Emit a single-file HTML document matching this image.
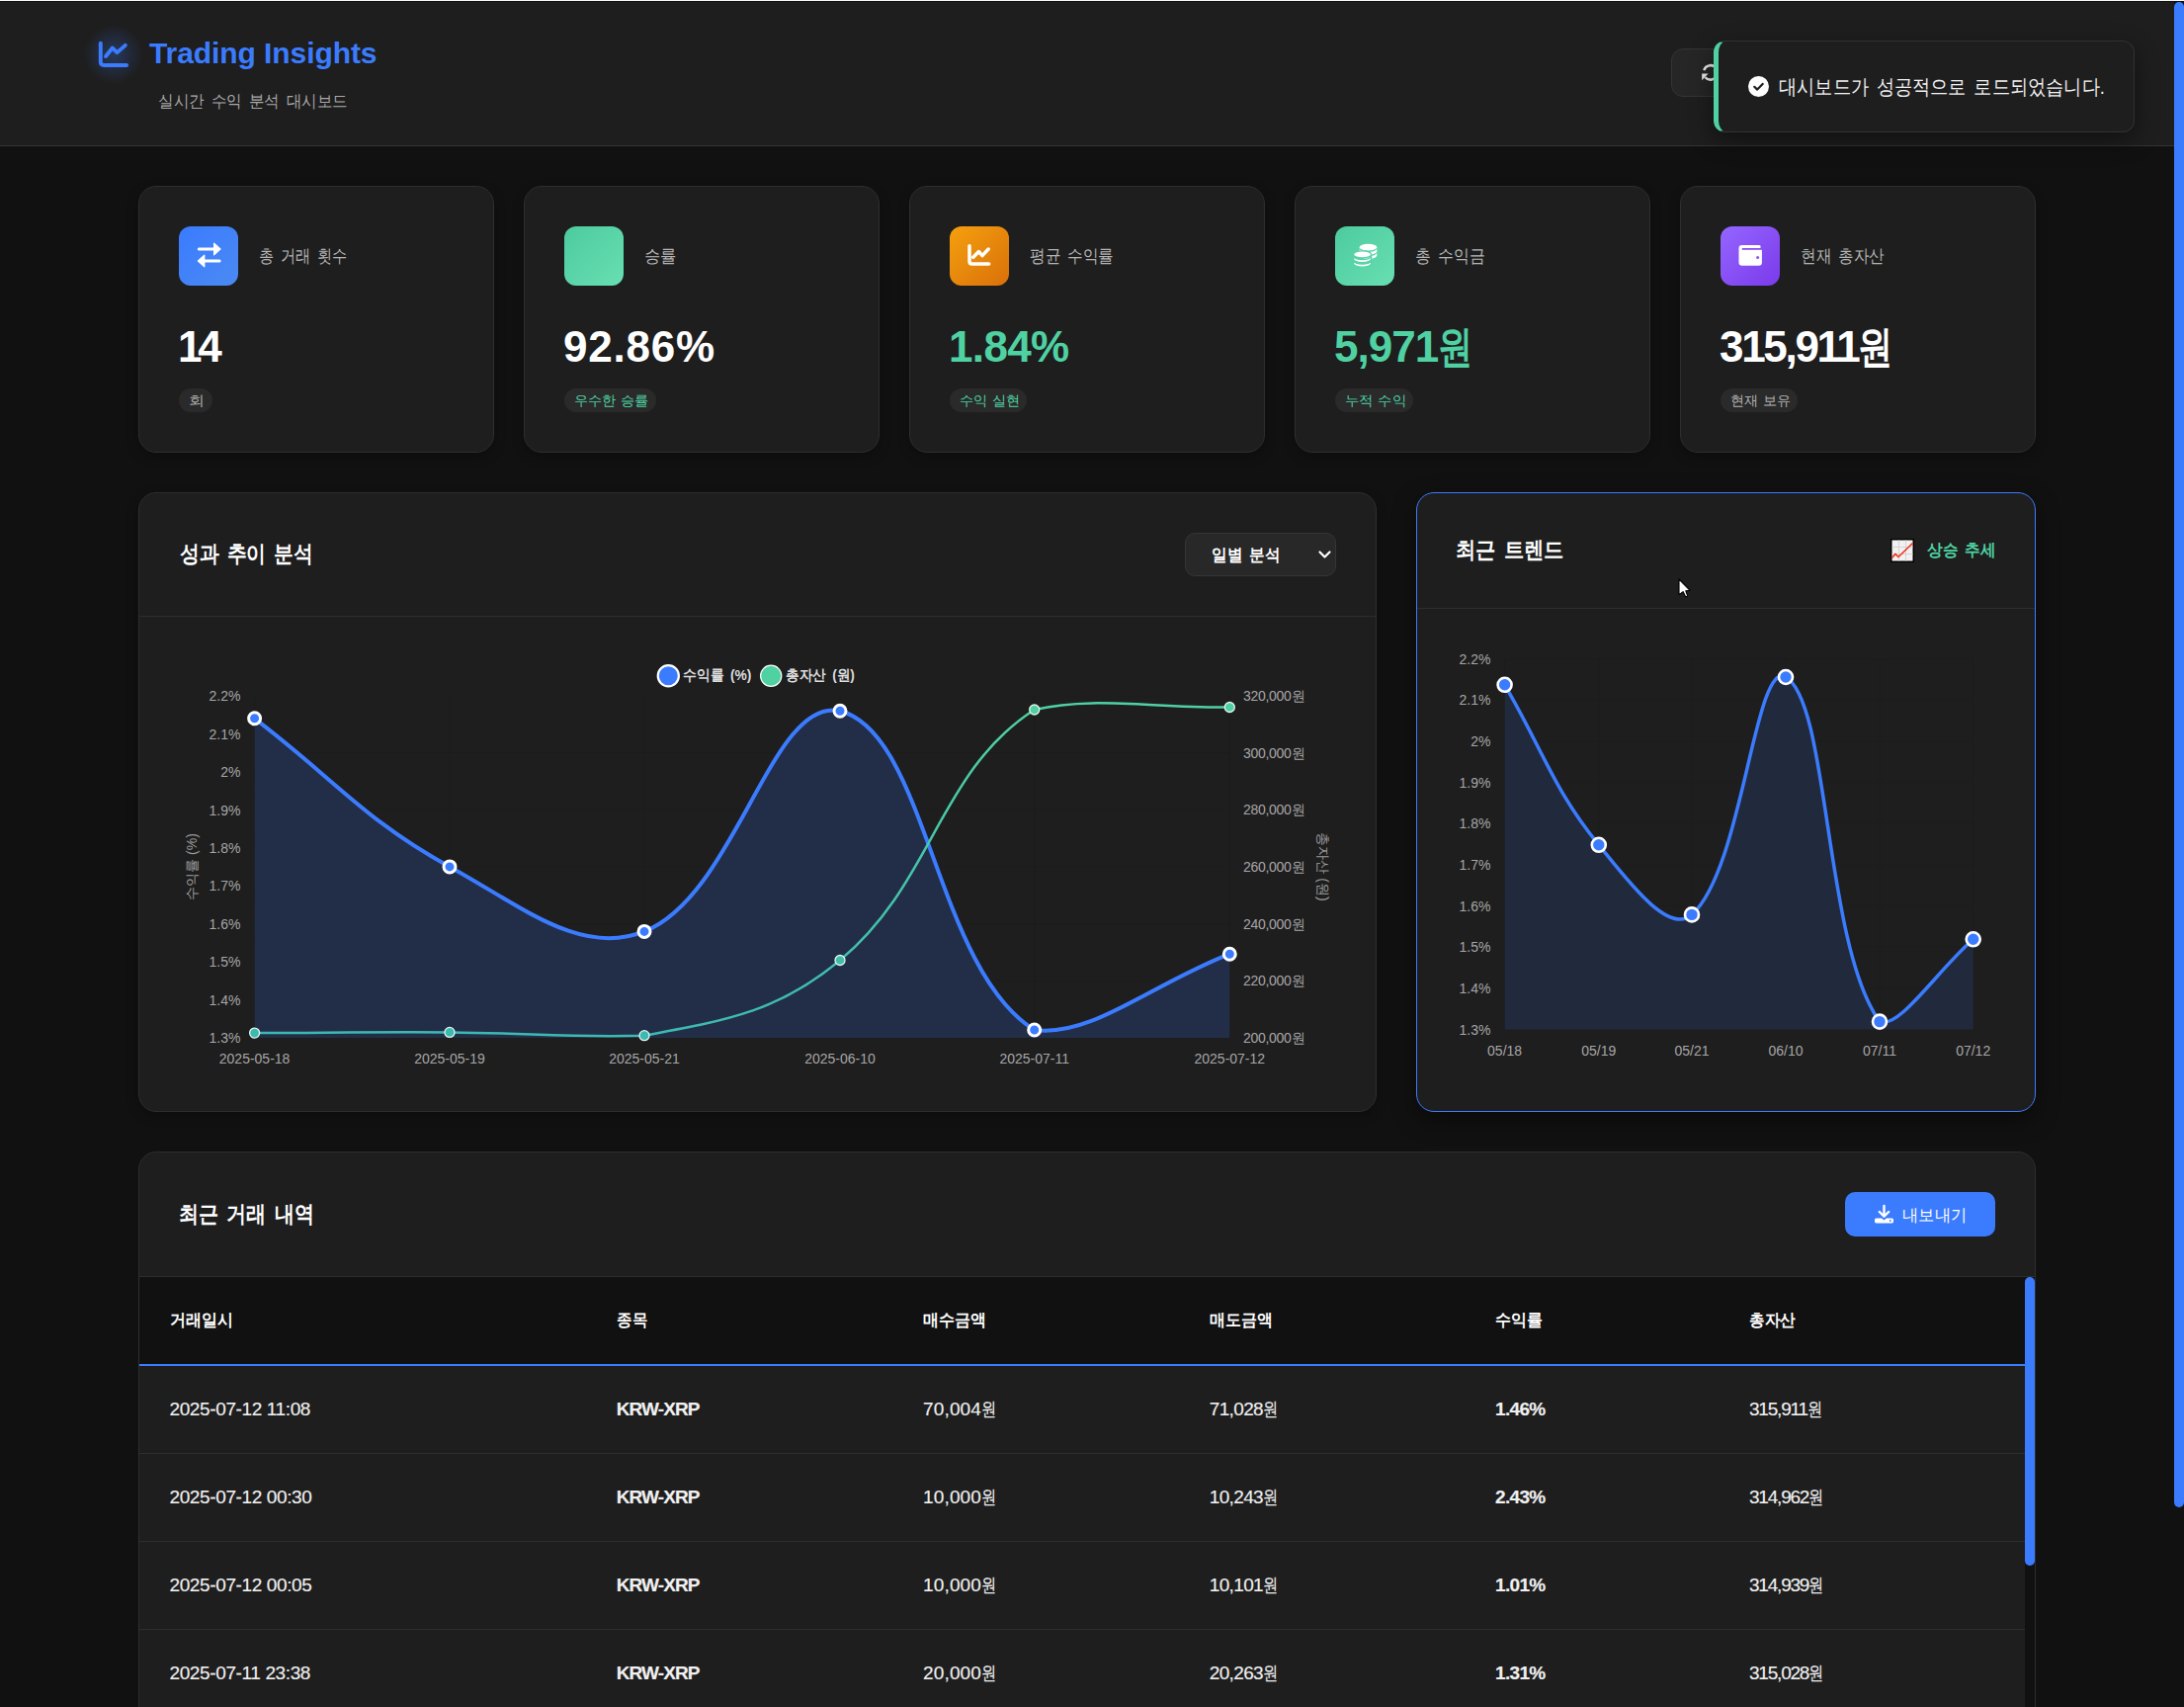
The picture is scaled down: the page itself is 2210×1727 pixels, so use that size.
<!DOCTYPE html><html><head><meta charset="utf-8"><style>
html,body{margin:0;padding:0;background:#111111;width:2210px;height:1727px;overflow:hidden;position:relative;font-family:"Liberation Sans",sans-serif}
.t{position:absolute;white-space:nowrap;line-height:1}
.won{display:inline-block;letter-spacing:0;transform:scaleX(0.8);transform-origin:0 50%;margin-right:-0.2em}
</style></head><body>
<div style="position:absolute;left:0px;top:0px;width:2210px;height:1px;background:#f7f7f7"></div>
<div style="position:absolute;left:0px;top:1px;width:2210px;height:1px;background:#111"></div>
<div style="position:absolute;left:0px;top:2px;width:2200px;height:145px;background:#1e1e1e"></div>
<div style="position:absolute;left:0px;top:147px;width:2200px;height:1px;background:#333"></div>
<svg style="position:absolute;left:90px;top:33px;overflow:visible" width="50" height="44" viewBox="0 0 50 44">
<defs><radialGradient id="glow"><stop offset="0" stop-color="#3b7cff" stop-opacity="0.28"/><stop offset="1" stop-color="#3b7cff" stop-opacity="0"/></radialGradient></defs>
<circle cx="25" cy="22" r="30" fill="url(#glow)"/>
<path d="M11.8,10.8 V29.5 Q11.8,33 15.3,33 H38.1" fill="none" stroke="#3b7cff" stroke-width="3.9" stroke-linecap="round" stroke-linejoin="round"/>
<path d="M17,23.9 L23.8,15.6 L28.5,20.1 L36.8,12.9" fill="none" stroke="#3b7cff" stroke-width="3.9" stroke-linecap="round" stroke-linejoin="round"/>
</svg>
<div class="t" id="e0" style="left:151.0px;top:39.2px;font-size:30px;font-weight:700;color:#3b7cff;letter-spacing:-0.08px;word-spacing:0px;">Trading Insights</div>
<div class="t" id="e1" style="left:160.0px;top:94.0px;font-size:17px;font-weight:400;color:#a8a8a8;letter-spacing:0px;transform:scaleX(0.9137);transform-origin:0 50%;word-spacing:3px;">실시간 수익 분석 대시보드</div>
<div style="position:absolute;left:1691px;top:49px;width:130px;height:49px;background:#262626;border:1px solid #343434;border-radius:12px;box-sizing:border-box"></div>
<svg style="position:absolute;left:1716px;top:60px" width="30" height="26" viewBox="0 0 30 26">
<path d="M8.3,11.2 A7,7 0 0 1 21,9.5" fill="none" stroke="#ececec" stroke-width="2.5"/>
<path d="M21.5,15.5 A7,7 0 0 1 9.5,18.2" fill="none" stroke="#ececec" stroke-width="2.5"/>
<path d="M6.2,14.6 L12.6,14.6 L6.2,21.2 Z" fill="#ececec"/>
<path d="M23.8,11.8 L17.4,11.8 L23.8,5.2 Z" fill="#ececec"/>
</svg>
<div style="position:absolute;left:1734px;top:41px;width:426px;height:93px;background:#1e1e1e;border:1px solid #323232;border-left:5px solid #4fd1a2;border-radius:12px;box-sizing:border-box;box-shadow:0 8px 24px rgba(0,0,0,0.45)"></div>
<svg style="position:absolute;left:1768.9px;top:77px" width="21" height="21" viewBox="0 0 21 21">
<circle cx="10.5" cy="10.5" r="10.5" fill="#fff"/>
<path d="M6.3,10.8 L9.2,13.6 L14.6,7.9" fill="none" stroke="#1e1e1e" stroke-width="2.2" stroke-linecap="round" stroke-linejoin="round"/>
</svg>
<div class="t" id="e2" style="left:1799.5px;top:76.9px;font-size:21px;font-weight:400;color:#f2f2f2;letter-spacing:0px;transform:scaleX(0.8668);transform-origin:0 50%;word-spacing:3px;">대시보드가 성공적으로 로드되었습니다.</div>
<div style="position:absolute;left:140px;top:188px;width:360px;height:270px;background:#1e1e1e;border:1px solid #2e2e2e;border-radius:18px;box-sizing:border-box;box-shadow:0 4px 12px rgba(0,0,0,0.25)"></div>
<div style="position:absolute;left:181px;top:229px;width:60px;height:60px;background:linear-gradient(135deg,#3a7bff,#4b8af2);border-radius:12px"></div>
<svg style="position:absolute;left:181px;top:229px" width="60" height="60" viewBox="0 0 60 60"><path d="M20.3,23 H36.5" stroke="#fff" stroke-width="3" stroke-linecap="round"/><path d="M35.6,17.2 L42,23 L35.6,28.8 Z" fill="#fff" stroke="#fff" stroke-width="1.2" stroke-linejoin="round"/><path d="M41.1,35 H25" stroke="#fff" stroke-width="3" stroke-linecap="round"/><path d="M25.8,29.2 L19.4,35 L25.8,40.8 Z" fill="#fff" stroke="#fff" stroke-width="1.2" stroke-linejoin="round"/></svg>
<div class="t" id="e3" style="left:261.5px;top:249.5px;font-size:18px;font-weight:400;color:#b4b4b4;letter-spacing:0px;transform:scaleX(0.8436);transform-origin:0 50%;word-spacing:3px;">총 거래 횟수</div>
<div class="t" id="e4" style="left:180.0px;top:329.1px;font-size:44px;font-weight:700;color:#ffffff;letter-spacing:-4.30px;word-spacing:0px;">14</div>
<div style="position:absolute;left:181px;top:393px;width:34px;height:24px;background:#2a2a2a;border-radius:12px"></div>
<div class="t" id="e5" style="left:191.0px;top:398.2px;font-size:14px;font-weight:500;color:#b0b0b0;letter-spacing:0px;transform:scaleX(1.1440);transform-origin:0 50%;word-spacing:0.5px;">회</div>
<div style="position:absolute;left:530px;top:188px;width:360px;height:270px;background:#1e1e1e;border:1px solid #2e2e2e;border-radius:18px;box-sizing:border-box;box-shadow:0 4px 12px rgba(0,0,0,0.25)"></div>
<div style="position:absolute;left:571px;top:229px;width:60px;height:60px;background:linear-gradient(135deg,#4ccb9f,#68dfb2);border-radius:12px"></div>
<div class="t" id="e6" style="left:651.5px;top:249.5px;font-size:18px;font-weight:400;color:#b4b4b4;letter-spacing:0px;transform:scaleX(0.9104);transform-origin:0 50%;word-spacing:3px;">승률</div>
<div class="t" id="e7" style="left:570.0px;top:329.1px;font-size:44px;font-weight:700;color:#ffffff;letter-spacing:0.80px;word-spacing:0px;">92.86%</div>
<div style="position:absolute;left:571px;top:393px;width:93px;height:24px;background:#2a2a2a;border-radius:12px"></div>
<div class="t" id="e8" style="left:581.0px;top:398.2px;font-size:14px;font-weight:500;color:#4fd1a2;letter-spacing:0px;transform:scaleX(1.0146);transform-origin:0 50%;word-spacing:0.5px;">우수한 승률</div>
<div style="position:absolute;left:920px;top:188px;width:360px;height:270px;background:#1e1e1e;border:1px solid #2e2e2e;border-radius:18px;box-sizing:border-box;box-shadow:0 4px 12px rgba(0,0,0,0.25)"></div>
<div style="position:absolute;left:961px;top:229px;width:60px;height:60px;background:linear-gradient(135deg,#f5a00e,#d9700a);border-radius:12px"></div>
<svg style="position:absolute;left:961px;top:229px" width="60" height="60" viewBox="0 0 60 60"><path d="M20,19.8 V35.5 Q20,38 22.5,38 H39.7" fill="none" stroke="#fff" stroke-width="3.5" stroke-linecap="round"/><path d="M23.8,31.3 L29.4,25.5 L33,29.6 L39.2,23" fill="none" stroke="#fff" stroke-width="3.5" stroke-linecap="round" stroke-linejoin="round"/></svg>
<div class="t" id="e9" style="left:1041.5px;top:249.5px;font-size:18px;font-weight:400;color:#b4b4b4;letter-spacing:0px;transform:scaleX(0.8678);transform-origin:0 50%;word-spacing:3px;">평균 수익률</div>
<div class="t" id="e10" style="left:960.0px;top:329.1px;font-size:44px;font-weight:700;color:#4fd1a2;letter-spacing:-0.65px;word-spacing:0px;">1.84%</div>
<div style="position:absolute;left:961px;top:393px;width:78px;height:24px;background:#2a2a2a;border-radius:12px"></div>
<div class="t" id="e11" style="left:971.0px;top:398.2px;font-size:14px;font-weight:500;color:#4fd1a2;letter-spacing:0px;transform:scaleX(1.0149);transform-origin:0 50%;word-spacing:0.5px;">수익 실현</div>
<div style="position:absolute;left:1310px;top:188px;width:360px;height:270px;background:#1e1e1e;border:1px solid #2e2e2e;border-radius:18px;box-sizing:border-box;box-shadow:0 4px 12px rgba(0,0,0,0.25)"></div>
<div style="position:absolute;left:1351px;top:229px;width:60px;height:60px;background:linear-gradient(135deg,#4ccb9f,#68dfb2);border-radius:12px"></div>
<svg style="position:absolute;left:1351px;top:229px" width="60" height="60" viewBox="0 0 60 60"><ellipse cx="33.5" cy="21.2" rx="8.8" ry="3.4" fill="#fff"/><path d="M24.7,22.6 A8.8,3.4 0 0 0 42.3,22.6 V25.4 A8.8,3.4 0 0 1 24.7,25.4 Z" fill="#fff"/><path d="M24.7,26.8 A8.8,3.4 0 0 0 42.3,26.8 V29.5 A8.8,3.4 0 0 1 24.7,29.5 Z" fill="#fff"/><g stroke="#58d3a8" stroke-width="1.3"><ellipse cx="27.6" cy="28.4" rx="9" ry="3.6" fill="#fff"/><path d="M18.6,30 A9,3.6 0 0 0 36.6,30 V33 A9,3.6 0 0 1 18.6,33 Z" fill="#fff"/><path d="M18.6,34.6 A9,3.6 0 0 0 36.6,34.6 V37.6 A9,3.6 0 0 1 18.6,37.6 Z" fill="#fff"/></g></svg>
<div class="t" id="e12" style="left:1431.5px;top:249.5px;font-size:18px;font-weight:400;color:#b4b4b4;letter-spacing:0px;transform:scaleX(0.8826);transform-origin:0 50%;word-spacing:3px;">총 수익금</div>
<div class="t" id="e13" style="left:1350.0px;top:329.1px;font-size:44px;font-weight:700;color:#4fd1a2;letter-spacing:-1.00px;word-spacing:0px;">5,971<span class="won">원</span></div>
<div style="position:absolute;left:1351px;top:393px;width:78.6px;height:24px;background:#2a2a2a;border-radius:12px"></div>
<div class="t" id="e14" style="left:1361.0px;top:398.2px;font-size:14px;font-weight:500;color:#4fd1a2;letter-spacing:0px;transform:scaleX(1.0324);transform-origin:0 50%;word-spacing:0.5px;">누적 수익</div>
<div style="position:absolute;left:1700px;top:188px;width:360px;height:270px;background:#1e1e1e;border:1px solid #2e2e2e;border-radius:18px;box-sizing:border-box;box-shadow:0 4px 12px rgba(0,0,0,0.25)"></div>
<div style="position:absolute;left:1741px;top:229px;width:60px;height:60px;background:linear-gradient(135deg,#9466ff,#7b3aea);border-radius:12px"></div>
<svg style="position:absolute;left:1741px;top:229px" width="60" height="60" viewBox="0 0 60 60"><rect x="18.5" y="19" width="23.4" height="20.7" rx="3.2" fill="#fff"/><path d="M21.8,22.9 H42.5" stroke="#8750f2" stroke-width="1.8"/><rect x="40.5" y="18" width="3" height="4" fill="#874ff1"/><circle cx="37.6" cy="31.5" r="1.5" fill="#8a55f5"/></svg>
<div class="t" id="e15" style="left:1821.5px;top:249.5px;font-size:18px;font-weight:400;color:#b4b4b4;letter-spacing:0px;transform:scaleX(0.8678);transform-origin:0 50%;word-spacing:3px;">현재 총자산</div>
<div class="t" id="e16" style="left:1740.0px;top:329.1px;font-size:44px;font-weight:700;color:#ffffff;letter-spacing:-2.31px;word-spacing:0px;">315,911<span class="won">원</span></div>
<div style="position:absolute;left:1741px;top:393px;width:78.3px;height:24px;background:#2a2a2a;border-radius:12px"></div>
<div class="t" id="e17" style="left:1751.0px;top:398.2px;font-size:14px;font-weight:500;color:#b0b0b0;letter-spacing:0px;transform:scaleX(1.0124);transform-origin:0 50%;word-spacing:0.5px;">현재 보유</div>
<div style="position:absolute;left:140px;top:498px;width:1253px;height:627px;background:#1e1e1e;border:1px solid #2e2e2e;border-radius:18px;box-sizing:border-box;box-shadow:0 4px 12px rgba(0,0,0,0.25)"></div>
<div class="t" id="e18" style="left:182.0px;top:549.3px;font-size:23px;font-weight:700;color:#ffffff;letter-spacing:0px;transform:scaleX(0.8606);transform-origin:0 50%;word-spacing:3px;">성과 추이 분석</div>
<div style="position:absolute;left:1199px;top:539px;width:153px;height:44px;background:#282828;border:1px solid #353535;border-radius:10px;box-sizing:border-box"></div>
<div class="t" id="e19" style="left:1226.0px;top:552.5px;font-size:17px;font-weight:600;color:#ffffff;letter-spacing:0px;transform:scaleX(0.9181);transform-origin:0 50%;word-spacing:3px;">일별 분석</div>
<svg style="position:absolute;left:1333px;top:555px" width="15" height="12" viewBox="0 0 15 12"><path d="M2.5,3.5 L7.5,8.5 L12.5,3.5" fill="none" stroke="#fff" stroke-width="2.2" stroke-linecap="round" stroke-linejoin="round"/></svg>
<div style="position:absolute;left:141px;top:623px;width:1251px;height:1px;background:#2e2e2e"></div>
<div style="position:absolute;left:1433px;top:498px;width:627px;height:627px;background:#1e1e1e;border:1px solid #3b7cff;border-radius:18px;box-sizing:border-box;box-shadow:0 8px 24px rgba(0,0,0,0.45)"></div>
<div class="t" id="e20" style="left:1473.0px;top:545.3px;font-size:23px;font-weight:700;color:#ffffff;letter-spacing:0px;transform:scaleX(0.8818);transform-origin:0 50%;word-spacing:3px;">최근 트렌드</div>
<svg style="position:absolute;left:1913px;top:545px" width="24" height="24" viewBox="0 0 24 24">
<rect x="0" y="0" width="24" height="24" fill="#000"/><rect x="1.5" y="1.5" width="21" height="21" fill="#f1f1f1"/>
<path d="M8.5,1.5 V22.5 M15.5,1.5 V22.5 M1.5,8.5 H22.5 M1.5,15.5 H22.5" stroke="#d0d0d0" stroke-width="0.9"/>
<path d="M1.5,19.5 L5,15.5 L8,18.5 L22.5,4.5" fill="none" stroke="#f0321e" stroke-width="1.6"/>
</svg>
<div class="t" id="e21" style="left:1950.4px;top:548.1px;font-size:17px;font-weight:600;color:#4fd1a2;letter-spacing:0px;transform:scaleX(0.9179);transform-origin:0 50%;word-spacing:3px;">상승 추세</div>
<div style="position:absolute;left:1434px;top:615px;width:625px;height:1px;background:#2e2e2e"></div>
<div style="position:absolute;left:140px;top:1165px;width:1920px;height:700px;background:#1e1e1e;border:1px solid #2e2e2e;border-radius:18px;box-sizing:border-box"></div>
<div class="t" id="e22" style="left:181.3px;top:1216.8px;font-size:23px;font-weight:700;color:#ffffff;letter-spacing:0px;transform:scaleX(0.8735);transform-origin:0 50%;word-spacing:3px;">최근 거래 내역</div>
<div style="position:absolute;left:1867px;top:1206px;width:152px;height:45px;background:#3b7cff;border-radius:10px"></div>
<svg style="position:absolute;left:1896px;top:1218px" width="21" height="21" viewBox="0 0 21 21">
<path d="M10.5,2 V12" stroke="#fff" stroke-width="2.4" stroke-linecap="round"/><path d="M5.8,8 L10.5,12.6 L15.2,8" fill="none" stroke="#fff" stroke-width="2.4" stroke-linecap="round" stroke-linejoin="round"/>
<path d="M2.5,14.5 H8 L10.5,16.5 L13,14.5 H18.5 Q20,14.5 20,16 V17.8 Q20,19.5 18.5,19.5 H2.5 Q1,19.5 1,17.8 V16 Q1,14.5 2.5,14.5 Z" fill="#fff"/><circle cx="16.8" cy="17" r="0.9" fill="#3b7cff"/>
</svg>
<div class="t" id="e23" style="left:1925.0px;top:1221.1px;font-size:17px;font-weight:500;color:#ffffff;letter-spacing:0px;transform:scaleX(0.9572);transform-origin:0 50%;word-spacing:3px;">내보내기</div>
<div style="position:absolute;left:141px;top:1291px;width:1918px;height:1px;background:#2e2e2e"></div>
<div style="position:absolute;left:141px;top:1292px;width:1908px;height:88px;background:#111111"></div>
<div style="position:absolute;left:141px;top:1380px;width:1908px;height:2px;background:#3b7cff"></div>
<div class="t" id="e24" style="left:171.5px;top:1327.2px;font-size:17px;font-weight:700;color:#ffffff;letter-spacing:0px;transform:scaleX(0.9413);transform-origin:0 50%;word-spacing:3px;">거래일시</div>
<div class="t" id="e25" style="left:623.8px;top:1327.2px;font-size:17px;font-weight:700;color:#ffffff;letter-spacing:0px;transform:scaleX(0.9121);transform-origin:0 50%;word-spacing:3px;">종목</div>
<div class="t" id="e26" style="left:934.0px;top:1327.2px;font-size:17px;font-weight:700;color:#ffffff;letter-spacing:0px;transform:scaleX(0.9399);transform-origin:0 50%;word-spacing:3px;">매수금액</div>
<div class="t" id="e27" style="left:1223.8px;top:1327.2px;font-size:17px;font-weight:700;color:#ffffff;letter-spacing:0px;transform:scaleX(0.9399);transform-origin:0 50%;word-spacing:3px;">매도금액</div>
<div class="t" id="e28" style="left:1513.0px;top:1327.2px;font-size:17px;font-weight:700;color:#ffffff;letter-spacing:0px;transform:scaleX(0.9403);transform-origin:0 50%;word-spacing:3px;">수익률</div>
<div class="t" id="e29" style="left:1770.0px;top:1327.2px;font-size:17px;font-weight:700;color:#ffffff;letter-spacing:0px;transform:scaleX(0.9195);transform-origin:0 50%;word-spacing:3px;">총자산</div>
<div class="t" id="e30" style="left:171.5px;top:1416.3px;font-size:19px;font-weight:400;color:#f0f0f0;letter-spacing:-0.38px;word-spacing:0px;-webkit-text-stroke:0.15px #f0f0f0;">2025-07-12 11:08</div>
<div class="t" id="e31" style="left:623.8px;top:1416.3px;font-size:19px;font-weight:700;color:#f0f0f0;letter-spacing:-0.90px;word-spacing:0px;-webkit-text-stroke:0.15px #f0f0f0;">KRW-XRP</div>
<div class="t" id="e32" style="left:934.0px;top:1416.3px;font-size:19px;font-weight:400;color:#f0f0f0;letter-spacing:0.16px;word-spacing:0px;-webkit-text-stroke:0.15px #f0f0f0;">70,004<span class="won">원</span></div>
<div class="t" id="e33" style="left:1223.8px;top:1416.3px;font-size:19px;font-weight:400;color:#f0f0f0;letter-spacing:-0.66px;word-spacing:0px;-webkit-text-stroke:0.15px #f0f0f0;">71,028<span class="won">원</span></div>
<div class="t" id="e34" style="left:1513.0px;top:1416.3px;font-size:19px;font-weight:700;color:#f0f0f0;letter-spacing:-0.66px;word-spacing:0px;-webkit-text-stroke:0.15px #f0f0f0;">1.46%</div>
<div class="t" id="e35" style="left:1770.0px;top:1416.3px;font-size:19px;font-weight:400;color:#f0f0f0;letter-spacing:-1.21px;word-spacing:0px;-webkit-text-stroke:0.15px #f0f0f0;">315,911<span class="won">원</span></div>
<div style="position:absolute;left:141px;top:1470px;width:1908px;height:1px;background:#2e2e2e"></div>
<div class="t" id="e36" style="left:171.5px;top:1505.3px;font-size:19px;font-weight:400;color:#f0f0f0;letter-spacing:-0.38px;word-spacing:0px;-webkit-text-stroke:0.15px #f0f0f0;">2025-07-12 00:30</div>
<div class="t" id="e37" style="left:623.8px;top:1505.3px;font-size:19px;font-weight:700;color:#f0f0f0;letter-spacing:-0.90px;word-spacing:0px;-webkit-text-stroke:0.15px #f0f0f0;">KRW-XRP</div>
<div class="t" id="e38" style="left:934.0px;top:1505.3px;font-size:19px;font-weight:400;color:#f0f0f0;letter-spacing:0.16px;word-spacing:0px;-webkit-text-stroke:0.15px #f0f0f0;">10,000<span class="won">원</span></div>
<div class="t" id="e39" style="left:1223.8px;top:1505.3px;font-size:19px;font-weight:400;color:#f0f0f0;letter-spacing:-0.66px;word-spacing:0px;-webkit-text-stroke:0.15px #f0f0f0;">10,243<span class="won">원</span></div>
<div class="t" id="e40" style="left:1513.0px;top:1505.3px;font-size:19px;font-weight:700;color:#f0f0f0;letter-spacing:-0.66px;word-spacing:0px;-webkit-text-stroke:0.15px #f0f0f0;">2.43%</div>
<div class="t" id="e41" style="left:1770.0px;top:1505.3px;font-size:19px;font-weight:400;color:#f0f0f0;letter-spacing:-1.21px;word-spacing:0px;-webkit-text-stroke:0.15px #f0f0f0;">314,962<span class="won">원</span></div>
<div style="position:absolute;left:141px;top:1559px;width:1908px;height:1px;background:#2e2e2e"></div>
<div class="t" id="e42" style="left:171.5px;top:1594.3px;font-size:19px;font-weight:400;color:#f0f0f0;letter-spacing:-0.38px;word-spacing:0px;-webkit-text-stroke:0.15px #f0f0f0;">2025-07-12 00:05</div>
<div class="t" id="e43" style="left:623.8px;top:1594.3px;font-size:19px;font-weight:700;color:#f0f0f0;letter-spacing:-0.90px;word-spacing:0px;-webkit-text-stroke:0.15px #f0f0f0;">KRW-XRP</div>
<div class="t" id="e44" style="left:934.0px;top:1594.3px;font-size:19px;font-weight:400;color:#f0f0f0;letter-spacing:0.16px;word-spacing:0px;-webkit-text-stroke:0.15px #f0f0f0;">10,000<span class="won">원</span></div>
<div class="t" id="e45" style="left:1223.8px;top:1594.3px;font-size:19px;font-weight:400;color:#f0f0f0;letter-spacing:-0.66px;word-spacing:0px;-webkit-text-stroke:0.15px #f0f0f0;">10,101<span class="won">원</span></div>
<div class="t" id="e46" style="left:1513.0px;top:1594.3px;font-size:19px;font-weight:700;color:#f0f0f0;letter-spacing:-0.66px;word-spacing:0px;-webkit-text-stroke:0.15px #f0f0f0;">1.01%</div>
<div class="t" id="e47" style="left:1770.0px;top:1594.3px;font-size:19px;font-weight:400;color:#f0f0f0;letter-spacing:-1.21px;word-spacing:0px;-webkit-text-stroke:0.15px #f0f0f0;">314,939<span class="won">원</span></div>
<div style="position:absolute;left:141px;top:1648px;width:1908px;height:1px;background:#2e2e2e"></div>
<div class="t" id="e48" style="left:171.5px;top:1683.3px;font-size:19px;font-weight:400;color:#f0f0f0;letter-spacing:-0.38px;word-spacing:0px;-webkit-text-stroke:0.15px #f0f0f0;">2025-07-11 23:38</div>
<div class="t" id="e49" style="left:623.8px;top:1683.3px;font-size:19px;font-weight:700;color:#f0f0f0;letter-spacing:-0.90px;word-spacing:0px;-webkit-text-stroke:0.15px #f0f0f0;">KRW-XRP</div>
<div class="t" id="e50" style="left:934.0px;top:1683.3px;font-size:19px;font-weight:400;color:#f0f0f0;letter-spacing:0.16px;word-spacing:0px;-webkit-text-stroke:0.15px #f0f0f0;">20,000<span class="won">원</span></div>
<div class="t" id="e51" style="left:1223.8px;top:1683.3px;font-size:19px;font-weight:400;color:#f0f0f0;letter-spacing:-0.66px;word-spacing:0px;-webkit-text-stroke:0.15px #f0f0f0;">20,263<span class="won">원</span></div>
<div class="t" id="e52" style="left:1513.0px;top:1683.3px;font-size:19px;font-weight:700;color:#f0f0f0;letter-spacing:-0.66px;word-spacing:0px;-webkit-text-stroke:0.15px #f0f0f0;">1.31%</div>
<div class="t" id="e53" style="left:1770.0px;top:1683.3px;font-size:19px;font-weight:400;color:#f0f0f0;letter-spacing:-1.21px;word-spacing:0px;-webkit-text-stroke:0.15px #f0f0f0;">315,028<span class="won">원</span></div>
<div style="position:absolute;left:141px;top:1737px;width:1908px;height:1px;background:#2e2e2e"></div>
<div style="position:absolute;left:2049px;top:1292px;width:10px;height:440px;background:#111111"></div>
<div style="position:absolute;left:2049px;top:1292px;width:10px;height:292px;background:#3b7cff;border-radius:5px"></div>
<div style="position:absolute;left:2200px;top:2px;width:10px;height:1725px;background:#111111"></div>
<div style="position:absolute;left:2200px;top:2px;width:10px;height:1523px;background:#3b7cff;border-radius:5px"></div>
<svg style="position:absolute;left:0;top:0" width="2210" height="1727" viewBox="0 0 2210 1727"><defs><linearGradient id="gg" x1="0" y1="704" x2="0" y2="1050" gradientUnits="userSpaceOnUse"><stop offset="0" stop-color="#4fd1a2"/><stop offset="1" stop-color="#3cb9b0"/></linearGradient></defs><line x1="257.6" y1="704.0" x2="1244.3" y2="704.0" stroke="rgba(0,0,0,0.06)" stroke-width="1"/><line x1="257.6" y1="761.7" x2="1244.3" y2="761.7" stroke="rgba(0,0,0,0.06)" stroke-width="1"/><line x1="257.6" y1="819.3" x2="1244.3" y2="819.3" stroke="rgba(0,0,0,0.06)" stroke-width="1"/><line x1="257.6" y1="877.0" x2="1244.3" y2="877.0" stroke="rgba(0,0,0,0.06)" stroke-width="1"/><line x1="257.6" y1="934.7" x2="1244.3" y2="934.7" stroke="rgba(0,0,0,0.06)" stroke-width="1"/><line x1="257.6" y1="992.3" x2="1244.3" y2="992.3" stroke="rgba(0,0,0,0.06)" stroke-width="1"/><line x1="257.6" y1="1050.0" x2="1244.3" y2="1050.0" stroke="rgba(0,0,0,0.06)" stroke-width="1"/><line x1="257.6" y1="704.0" x2="257.6" y2="1050.0" stroke="rgba(0,0,0,0.06)" stroke-width="1"/><line x1="455.0" y1="704.0" x2="455.0" y2="1050.0" stroke="rgba(0,0,0,0.06)" stroke-width="1"/><line x1="652.0" y1="704.0" x2="652.0" y2="1050.0" stroke="rgba(0,0,0,0.06)" stroke-width="1"/><line x1="850.0" y1="704.0" x2="850.0" y2="1050.0" stroke="rgba(0,0,0,0.06)" stroke-width="1"/><line x1="1046.7" y1="704.0" x2="1046.7" y2="1050.0" stroke="rgba(0,0,0,0.06)" stroke-width="1"/><line x1="1244.3" y1="704.0" x2="1244.3" y2="1050.0" stroke="rgba(0,0,0,0.06)" stroke-width="1"/><line x1="1522.6" y1="666.6" x2="1996.7" y2="666.6" stroke="rgba(0,0,0,0.04)" stroke-width="1"/><line x1="1522.6" y1="708.3" x2="1996.7" y2="708.3" stroke="rgba(0,0,0,0.04)" stroke-width="1"/><line x1="1522.6" y1="749.9" x2="1996.7" y2="749.9" stroke="rgba(0,0,0,0.04)" stroke-width="1"/><line x1="1522.6" y1="791.6" x2="1996.7" y2="791.6" stroke="rgba(0,0,0,0.04)" stroke-width="1"/><line x1="1522.6" y1="833.3" x2="1996.7" y2="833.3" stroke="rgba(0,0,0,0.04)" stroke-width="1"/><line x1="1522.6" y1="874.9" x2="1996.7" y2="874.9" stroke="rgba(0,0,0,0.04)" stroke-width="1"/><line x1="1522.6" y1="916.6" x2="1996.7" y2="916.6" stroke="rgba(0,0,0,0.04)" stroke-width="1"/><line x1="1522.6" y1="958.3" x2="1996.7" y2="958.3" stroke="rgba(0,0,0,0.04)" stroke-width="1"/><line x1="1522.6" y1="999.9" x2="1996.7" y2="999.9" stroke="rgba(0,0,0,0.04)" stroke-width="1"/><line x1="1522.6" y1="1041.6" x2="1996.7" y2="1041.6" stroke="rgba(0,0,0,0.04)" stroke-width="1"/><line x1="1522.6" y1="666.6" x2="1522.6" y2="1041.6" stroke="rgba(0,0,0,0.06)" stroke-width="1"/><line x1="1617.8" y1="666.6" x2="1617.8" y2="1041.6" stroke="rgba(0,0,0,0.06)" stroke-width="1"/><line x1="1712.0" y1="666.6" x2="1712.0" y2="1041.6" stroke="rgba(0,0,0,0.06)" stroke-width="1"/><line x1="1807.0" y1="666.6" x2="1807.0" y2="1041.6" stroke="rgba(0,0,0,0.06)" stroke-width="1"/><line x1="1902.0" y1="666.6" x2="1902.0" y2="1041.6" stroke="rgba(0,0,0,0.06)" stroke-width="1"/><line x1="1996.7" y1="666.6" x2="1996.7" y2="1041.6" stroke="rgba(0,0,0,0.06)" stroke-width="1"/><path d="M257.60,726.80 C336.56,786.84 369.13,829.96 455.00,876.90 C526.89,916.20 587.17,968.28 652.00,942.40 C745.17,905.20 780.36,704.00 850.00,719.20 C938.24,741.47 945.65,978.96 1046.70,1042.00 C1103.37,1050.00 1165.26,995.92 1244.30,965.20 L1244.3,1050.0 L257.6,1050.0 Z" fill="#222d48"/><path d="M257.60,726.80 C336.56,786.84 369.13,829.96 455.00,876.90 C526.89,916.20 587.17,968.28 652.00,942.40 C745.17,905.20 780.36,704.00 850.00,719.20 C938.24,741.47 945.65,978.96 1046.70,1042.00 C1103.37,1050.00 1165.26,995.92 1244.30,965.20" fill="none" stroke="#3b7cff" stroke-width="4"/><path d="M257.60,1045.10 C336.56,1044.82 376.05,1043.88 455.00,1044.40 C533.81,1044.92 575.92,1050.00 652.00,1047.70 C733.92,1032.58 787.16,1023.99 850.00,971.50 C945.04,892.11 949.09,781.37 1046.70,718.00 C1106.81,704.00 1165.26,716.50 1244.30,715.50" fill="none" stroke="url(#gg)" stroke-width="2.5"/><circle cx="257.6" cy="1045.1" r="5" fill="url(#gg)" stroke="#e6f5ef" stroke-width="1.3"/><circle cx="455.0" cy="1044.4" r="5" fill="url(#gg)" stroke="#e6f5ef" stroke-width="1.3"/><circle cx="652.0" cy="1047.7" r="5" fill="url(#gg)" stroke="#e6f5ef" stroke-width="1.3"/><circle cx="850.0" cy="971.5" r="5" fill="url(#gg)" stroke="#e6f5ef" stroke-width="1.3"/><circle cx="1046.7" cy="718.0" r="5" fill="url(#gg)" stroke="#e6f5ef" stroke-width="1.3"/><circle cx="1244.3" cy="715.5" r="5" fill="url(#gg)" stroke="#e6f5ef" stroke-width="1.3"/><circle cx="257.6" cy="726.8" r="6" fill="#3b7cff" stroke="#fff" stroke-width="3"/><circle cx="455.0" cy="876.9" r="6" fill="#3b7cff" stroke="#fff" stroke-width="3"/><circle cx="652.0" cy="942.4" r="6" fill="#3b7cff" stroke="#fff" stroke-width="3"/><circle cx="850.0" cy="719.2" r="6" fill="#3b7cff" stroke="#fff" stroke-width="3"/><circle cx="1046.7" cy="1042.0" r="6" fill="#3b7cff" stroke="#fff" stroke-width="3"/><circle cx="1244.3" cy="965.2" r="6" fill="#3b7cff" stroke="#fff" stroke-width="3"/><circle cx="676.3" cy="683.8" r="10.6" fill="#3b7cff" stroke="#fff" stroke-width="2.2"/><circle cx="780.2" cy="683.8" r="10.6" fill="#4fd1a2" stroke="#fff" stroke-width="1.2"/><path d="M1522.60,692.80 C1560.68,757.60 1571.22,797.60 1617.80,854.80 C1646.98,890.64 1688.32,946.65 1712.00,925.40 C1764.00,878.73 1775.30,666.95 1807.00,685.00 C1851.30,710.23 1845.75,954.94 1902.00,1033.60 C1921.63,1041.60 1958.82,983.62 1996.70,950.30 L1996.7,1041.6 L1522.6,1041.6 Z" fill="#212a3c"/><path d="M1522.60,692.80 C1560.68,757.60 1571.22,797.60 1617.80,854.80 C1646.98,890.64 1688.32,946.65 1712.00,925.40 C1764.00,878.73 1775.30,666.95 1807.00,685.00 C1851.30,710.23 1845.75,954.94 1902.00,1033.60 C1921.63,1041.60 1958.82,983.62 1996.70,950.30" fill="none" stroke="#3b7cff" stroke-width="3.5"/><circle cx="1522.6" cy="692.8" r="7" fill="#3b7cff" stroke="#fff" stroke-width="2.6"/><circle cx="1617.8" cy="854.8" r="7" fill="#3b7cff" stroke="#fff" stroke-width="2.6"/><circle cx="1712.0" cy="925.4" r="7" fill="#3b7cff" stroke="#fff" stroke-width="2.6"/><circle cx="1807.0" cy="685.0" r="7" fill="#3b7cff" stroke="#fff" stroke-width="2.6"/><circle cx="1902.0" cy="1033.6" r="7" fill="#3b7cff" stroke="#fff" stroke-width="2.6"/><circle cx="1996.7" cy="950.3" r="7" fill="#3b7cff" stroke="#fff" stroke-width="2.6"/></svg>
<div class="t" style="right:1966.5px;top:697.2px;font-size:14px;color:#a6a6a6">2.2%</div>
<div class="t" style="right:1966.5px;top:735.6px;font-size:14px;color:#a6a6a6">2.1%</div>
<div class="t" style="right:1966.5px;top:774.0px;font-size:14px;color:#a6a6a6">2%</div>
<div class="t" style="right:1966.5px;top:812.5px;font-size:14px;color:#a6a6a6">1.9%</div>
<div class="t" style="right:1966.5px;top:850.9px;font-size:14px;color:#a6a6a6">1.8%</div>
<div class="t" style="right:1966.5px;top:889.4px;font-size:14px;color:#a6a6a6">1.7%</div>
<div class="t" style="right:1966.5px;top:927.8px;font-size:14px;color:#a6a6a6">1.6%</div>
<div class="t" style="right:1966.5px;top:966.3px;font-size:14px;color:#a6a6a6">1.5%</div>
<div class="t" style="right:1966.5px;top:1004.7px;font-size:14px;color:#a6a6a6">1.4%</div>
<div class="t" style="right:1966.5px;top:1043.2px;font-size:14px;color:#a6a6a6">1.3%</div>
<div class="t" style="left:1258px;top:697.0px;font-size:14px;color:#a6a6a6;letter-spacing:-0.3px">320,000원</div>
<div class="t" style="left:1258px;top:754.7px;font-size:14px;color:#a6a6a6;letter-spacing:-0.3px">300,000원</div>
<div class="t" style="left:1258px;top:812.3px;font-size:14px;color:#a6a6a6;letter-spacing:-0.3px">280,000원</div>
<div class="t" style="left:1258px;top:870.0px;font-size:14px;color:#a6a6a6;letter-spacing:-0.3px">260,000원</div>
<div class="t" style="left:1258px;top:927.7px;font-size:14px;color:#a6a6a6;letter-spacing:-0.3px">240,000원</div>
<div class="t" style="left:1258px;top:985.3px;font-size:14px;color:#a6a6a6;letter-spacing:-0.3px">220,000원</div>
<div class="t" style="left:1258px;top:1043.0px;font-size:14px;color:#a6a6a6;letter-spacing:-0.3px">200,000원</div>
<div class="t" style="left:207.6px;width:100px;text-align:center;top:1064.2px;font-size:14px;color:#a6a6a6">2025-05-18</div>
<div class="t" style="left:405.0px;width:100px;text-align:center;top:1064.2px;font-size:14px;color:#a6a6a6">2025-05-19</div>
<div class="t" style="left:602.0px;width:100px;text-align:center;top:1064.2px;font-size:14px;color:#a6a6a6">2025-05-21</div>
<div class="t" style="left:800.0px;width:100px;text-align:center;top:1064.2px;font-size:14px;color:#a6a6a6">2025-06-10</div>
<div class="t" style="left:996.7px;width:100px;text-align:center;top:1064.2px;font-size:14px;color:#a6a6a6">2025-07-11</div>
<div class="t" style="left:1194.3px;width:100px;text-align:center;top:1064.2px;font-size:14px;color:#a6a6a6">2025-07-12</div>
<div class="t" style="left:144px;width:100px;text-align:center;top:870.0px;font-size:14px;color:#9a9a9a;transform:rotate(-90deg)">수익률 (%)</div>
<div class="t" style="left:1289px;width:100px;text-align:center;top:870.0px;font-size:14px;color:#9a9a9a;transform:rotate(90deg)">총자산 (원)</div>
<div class="t" id="e54" style="left:691.0px;top:674.6px;font-size:15px;font-weight:700;color:#dddddd;letter-spacing:0px;transform:scaleX(0.9200);transform-origin:0 50%;word-spacing:3px;">수익률 (%)</div>
<div class="t" id="e55" style="left:795.0px;top:674.6px;font-size:15px;font-weight:700;color:#dddddd;letter-spacing:0px;transform:scaleX(0.9059);transform-origin:0 50%;word-spacing:3px;">총자산 (원)</div>
<div class="t" style="right:701.5px;top:659.8px;font-size:14px;color:#a6a6a6">2.2%</div>
<div class="t" style="right:701.5px;top:701.4px;font-size:14px;color:#a6a6a6">2.1%</div>
<div class="t" style="right:701.5px;top:743.1px;font-size:14px;color:#a6a6a6">2%</div>
<div class="t" style="right:701.5px;top:784.8px;font-size:14px;color:#a6a6a6">1.9%</div>
<div class="t" style="right:701.5px;top:826.4px;font-size:14px;color:#a6a6a6">1.8%</div>
<div class="t" style="right:701.5px;top:868.1px;font-size:14px;color:#a6a6a6">1.7%</div>
<div class="t" style="right:701.5px;top:909.8px;font-size:14px;color:#a6a6a6">1.6%</div>
<div class="t" style="right:701.5px;top:951.4px;font-size:14px;color:#a6a6a6">1.5%</div>
<div class="t" style="right:701.5px;top:993.1px;font-size:14px;color:#a6a6a6">1.4%</div>
<div class="t" style="right:701.5px;top:1034.8px;font-size:14px;color:#a6a6a6">1.3%</div>
<div class="t" style="left:1482.6px;width:80px;text-align:center;top:1056.2px;font-size:14px;color:#a6a6a6">05/18</div>
<div class="t" style="left:1577.8px;width:80px;text-align:center;top:1056.2px;font-size:14px;color:#a6a6a6">05/19</div>
<div class="t" style="left:1672.0px;width:80px;text-align:center;top:1056.2px;font-size:14px;color:#a6a6a6">05/21</div>
<div class="t" style="left:1767.0px;width:80px;text-align:center;top:1056.2px;font-size:14px;color:#a6a6a6">06/10</div>
<div class="t" style="left:1862.0px;width:80px;text-align:center;top:1056.2px;font-size:14px;color:#a6a6a6">07/11</div>
<div class="t" style="left:1956.7px;width:80px;text-align:center;top:1056.2px;font-size:14px;color:#a6a6a6">07/12</div>
<svg style="position:absolute;left:1697.5px;top:585.4px" width="14" height="21" viewBox="0 0 14 21"><path d="M1,1 L1,16.6 L5.1,13.6 L7.8,18.9 L9.7,18.1 L7.8,12.7 L12.1,12.4 Z" fill="#fff" stroke="#000" stroke-width="1.1" stroke-linejoin="round"/></svg>
</body></html>
